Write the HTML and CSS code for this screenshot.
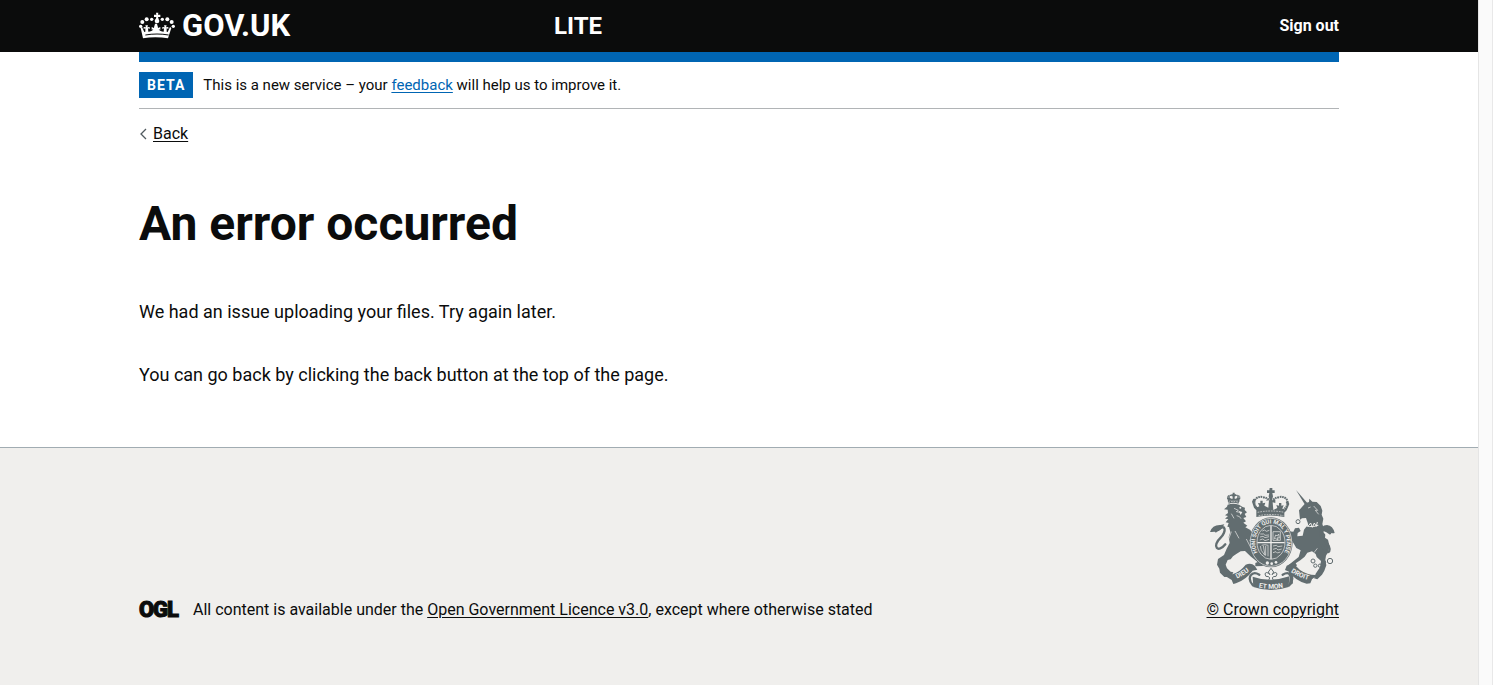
FILE: index.html
```html
<!DOCTYPE html>
<html lang="en">
<head>
<meta charset="utf-8">
<title>An error occurred - LITE - GOV.UK</title>
<link rel="stylesheet" href="styles.css">
</head>
<body>
<div class="page">
  <header class="header">
    <div class="container header-row">
      <div class="header-brand">
        <a class="brand" href="#">
          <svg class="brand-crown" viewBox="12 18 108 81" aria-hidden="true">
            <g fill="currentColor">
              <path d="M63 20h7l-1 6h7v7h-7l2 7h-9l2-7h-7v-7h7z"/>
              <circle cx="66" cy="45" r="7"/>
              <circle cx="50" cy="40" r="5"/><circle cx="35" cy="40" r="6"/><circle cx="22" cy="48" r="6"/><circle cx="17" cy="61" r="5"/>
              <circle cx="82" cy="40" r="5"/><circle cx="97" cy="40" r="6"/><circle cx="110" cy="48" r="6"/><circle cx="115" cy="61" r="5"/>
              <path d="M21 63l7 15 3-1V67l-5 2v-6l7 1-2-6h8l-2 6 7-1v6l-5-2 1 10c6 0 13-2 15-7l-5 1v-8l7 3c0-5 2-8 3-13h6c1 5 3 8 3 13l7-3v8l-5-1c2 5 9 7 15 7l1-10-5 2v-6l7 1-2-6h8l-2 6 7-1v6l-5-2v10l3 1 7-15 4 3-10 31c-24-4-52-4-75 0L17 66z"/>
            </g>
            <path d="M31 87c23-4 47-4 70 0" fill="none" stroke="#0b0c0c" stroke-width="3"/>
          </svg>
          <span>GOV.UK</span>
        </a>
      </div>
      <a class="service-name" href="#">LITE</a>
      <a class="sign-out" href="#">Sign out</a>
    </div>
  </header>

  <div class="container content">
    <div class="phase-banner">
      <strong class="tag">BETA</strong>
      <span class="phase-text">This is a new service – your <a class="link" href="#">feedback</a> will help us to improve it.</span>
    </div>
    <a class="back-link" href="#"><svg class="back-arrow" viewBox="0 0 8 12" aria-hidden="true"><path d="M7 1L2 6l5 5" fill="none" stroke="#505a5f" stroke-width="1.3"/></svg><span>Back</span></a>
    <main class="main">
      <h1 class="heading">An error occurred</h1>
      <p class="body-text">We had an issue uploading your files. Try again later.</p>
      <p class="body-text">You can go back by clicking the back button at the top of the page.</p>
    </main>
  </div>

  <footer class="footer">
    <div class="container footer-row">
      <div class="licence">
        <svg class="ogl" viewBox="0 0 41 20" role="img" aria-label="Open Government Licence"><text class="ogl-text" x="0 14 28" y="17">OGL</text></svg>
        <span>All content is available under the <a class="footer-link" href="#">Open Government Licence v3.0</a>, except where otherwise stated</span>
      </div>
      <a class="footer-link copyright" href="#">
        <svg class="crest" viewBox="33 24 375 306" aria-hidden="true">
          <defs>
            <path id="motto" d="M187 232A47 57 0 1 1 245 232"/>
            <path id="dieu" d="M103 300Q132 290 160 266"/>
            <path id="etmon" d="M166 320Q216 332 266 320"/>
            <path id="droit" d="M270 272Q300 294 334 301"/>
          </defs>
          <g fill="#626d70">
            <!-- lion -->
            <path d="M89 71l-3-9h36l-4 9q-14-5-29 0z"/>
            <path d="M101 38h6v5h4v5h-4v8h4l4-3-1-4h5v4l3 1-3 8H89l-4-8 3-1v-4h5l-1 4 5 3h4v-8h-4v-5h4z"/>
            <path d="M86 74q16-6 34 0l11 7 7 2-1 7 7 7-7 5 5 9-9 3 8 10-8 4 12 9-6 5 15 8 8 14-2 12-10 4 15 24 14 20 8 12 8 10-4 12-22 1 0-10 7-3-20-16-18-17-13 1-12 7-11 8-7 9-9 2-6 14 4 11 11 10 8 2-6 13-21 1-13-13-2-12-7-12 3-17 18-12 8-19 9-17-3-18 5-15-4-15-5-1 4-11-9-2 8-10-10-1 9-8-9-2 9-7-1-10-11-1 9-8z"/>
            <path d="M33 156q7-22 31-21l12-2-8 13q-9 9-16 8-9 3-19 2z"/>
            <!-- unicorn -->
            <path d="M291 30l34 39-7 5z"/>
            <path d="M300 91l19-21 11-4 1-10 9 9 13 1 12 12 5 14-2 12 5 12-3 16 4 12-1 12 6 8-1 9 9 6 4 17-2 17-8 14-2 12 3 17-6 16-7 12-14 14-10-3 5-14 13-19 3-19-13-12-3-9-11-8-14 4-8 12-13 11-14 9 4 6-10 10-13-2-1-10 10-8 19-15 6-20-13-7-7-12-6-10-17-4-7-9 1-9 9-6 18 1 5-10 12-2 5 10-9 6-1 10 16-2 4-18 11-14-2-12-3-9-12 1-6 4z"/>
            <path d="M366 158q-2-22 18-23 18 2 23 24-16 3-26-9z"/>
            <!-- crown -->
            <path d="M212 24h8v7h7v8h-7l2 10-3 12 10-2v10l-8-2 2 23 12-6-3-9 8 2v-8h7v8l7-1-4 10 6 3q13-13 4-23l7-3 4 9-8 19-7 7v13q-42-9-84 0V91l-7-8-6-18 4-9 7 3q-8 12 5 23l6-3-4-10 7 1v-8h7v8l8-2-3 9 12 6 2-23-8 2V59l10 2-3-12 2-10h-7v-8h7z"/>
            <!-- supporters' ribbon -->
            <path d="M74 285q12 3 26-2 25-9 40-29 16-7 27 3l8 12-14 3q-19 26-50 38l-8 2-5-12z"/>
            <path d="M355 285q-28 2-52-15l-22-22-18 9-5 13 12 5q20 28 53 36l11-1 5-12z"/>
            <path d="M161 290q53 19 110-1l-2 32q-53 18-106 0z"/>
            <path d="M272 291q-9-11 3-19l9 7-5 11 3 20-13 10z"/>
            <ellipse cx="216" cy="187" rx="65" ry="75"/>
          </g>
          <g fill="none" stroke="#626d70" stroke-width="7" stroke-linecap="round">
            <path d="M50 154c34-30 32 3 15 19-28 26-8 48 14 20"/>
            <path d="M393 160c-29-24-37 2-21 18 37 29 14 60-3 18"/>
            <path d="M162 316q-15-16-7-30 9-12 26-2M270 316q15-16 7-30-9-12-26-2"/>
          </g>
          <g fill="none" stroke="#626d70" stroke-width="6" stroke-dasharray="5 2">
            <path d="M181 91c-25-18-15-44 9-40q19 4 20 10M251 91c25-18 15-44-9-40q-19 4-20 10"/>
          </g>
          <g fill="none" stroke="#626d70" stroke-width="3">
            <circle cx="342" cy="243" r="6"/><circle cx="349" cy="257" r="5"/><circle cx="363" cy="257" r="5"/>
            <circle cx="375" cy="247" r="5"/><circle cx="393" cy="243" r="8"/><circle cx="297" cy="125" r="6"/>
          </g>
          <g fill="none" stroke="#626d70" stroke-width="4" stroke-dasharray="4 1">
            <path d="M90 63q-10-14 4-17 7 0 10 4M118 63q10-14-4-17-7 0-10 4"/>
          </g>
          <g fill="none" stroke="#f0efed" stroke-width="2">
            <ellipse cx="216" cy="187" rx="62" ry="72"/>
            <path d="M88 67q16-5 32 0M176 97q40-8 80 0M179 107q38-7 74 0" stroke-dasharray="5 3"/>
            <path d="M105 85l13 6-6 4 10 2M113 107q10 1 13 9M97 101l8 14M108 153l12 22M97 155l-8 22M142 177l14 27"/>
            <path d="M327 84l8-3M344 78l12 13-7 0 10 12M355 205l-10 13"/>
            <path d="M309 131q21 15 49 5M311 118l5 15 7-9 4 15 8-10 5 13 6-13 6 10 3-13" stroke-width="3"/>
          </g>
          <ellipse cx="216" cy="187" rx="42" ry="51" fill="#626d70" stroke="#f0efed" stroke-width="2"/>
          <path d="M216 137v100M175 188h82" stroke="#f0efed" stroke-width="4"/>
          <g fill="none" stroke="#f0efed" stroke-width="2">
            <path d="M190 153l7-3 5 4 9-3M184 162h10l4 4 12-1M183 171l9-2 6 4 12-3M182 180l9-3 7 5 12-4"/>
            <path d="M222 155h22v26h-22zM226 176l4-11 5 3 4-6 2 12-6-1 2 7-8-5z"/>
            <path d="M184 198q-1 13 13 27M193 197l5 29M200 198v29M207 197v32M188 196q8-4 20 0"/>
            <path d="M222 198l10-2 5 4 13-2M222 208l10-3 5 5 11-3M222 218l9-3 4 4 9-3"/>
          </g>
          <g fill="#f0efed">
            <circle cx="205" cy="249" r="5"/><circle cx="218" cy="251" r="4"/><circle cx="231" cy="247" r="4"/>
            <path d="M216 265l8 11-5 8q12-12 15-2 0 10-11 8l-3 4 3 7h-14l3-7-3-4q-11 2-11-8 3-10 15 2l-5-8z" stroke="#626d70" stroke-width="3"/>
            <circle cx="124" cy="83" r="3"/><path d="M119 93l11 3-5 9z"/>
          </g>
          <g class="crest-text">
            <text class="crest-motto"><textPath href="#motto" startOffset="50%">HONI SOIT QUI MAL Y PENSE</textPath></text>
            <text><textPath href="#dieu" startOffset="50%">DIEU</textPath></text>
            <text><textPath href="#etmon" startOffset="50%">ET MON</textPath></text>
            <text><textPath href="#droit" startOffset="50%">DROIT</textPath></text>
          </g>
        </svg>
        <span>© Crown copyright</span>
      </a>
    </div>
  </footer>
</div>
<div class="gutter"></div>
</body>
</html>
```
FILE: styles.css
```css
* { box-sizing: border-box; }

body {
  margin: 0;
  min-height: 100vh;
  display: flex;
  background: #fff;
  color: #0b0c0c;
  font-family: Roboto, "Liberation Sans", sans-serif;
  font-size: 16px;
  line-height: 20px;
}

.page {
  flex: 1;
  display: flex;
  flex-direction: column;
}

.gutter {
  width: 15px;
  background: #fafafa;
  border-left: 1px solid #e5e5e5;
  border-right: 1px solid #e8e8e8;
}

.container {
  width: calc(100% - 60px);
  max-width: 1200px;
  margin: 0 auto;
}

.header {
  background: #0b0c0c;
  color: #fff;
}

.header-row {
  display: flex;
  align-items: center;
  height: 52px;
  padding-bottom: 1px;
}

.header-brand { width: 415px; }

.brand {
  display: flex;
  align-items: center;
  gap: 7px;
  color: #fff;
  font-size: 31px;
  font-weight: 700;
  line-height: 32px;
  text-decoration: none;
}

.brand-crown {
  width: 36px;
  height: 27px;
}

.service-name {
  flex: 1;
  color: #fff;
  font-size: 24px;
  font-weight: 700;
  line-height: 30px;
  text-decoration: none;
}

.sign-out {
  color: #fff;
  font-weight: 700;
  text-decoration: none;
}

.content {
  border-top: 10px solid #0065b3;
}

.phase-banner {
  display: flex;
  align-items: center;
  gap: 10px;
  padding: 10px 0;
  border-bottom: 1px solid #b1b4b6;
}

.phase-text { font-size: 15px; }

.tag {
  padding: 5px 8px;
  background: #0065b3;
  color: #fff;
  font-size: 14px;
  line-height: 16px;
  letter-spacing: 1px;
}

.link { color: #0065b3; }

.link,
.footer-link,
.back-link span {
  text-decoration: underline;
  text-underline-offset: 2px;
  text-decoration-thickness: 1px;
}

.back-link {
  display: inline-flex;
  align-items: center;
  gap: 6px;
  margin-top: 15px;
  color: #0b0c0c;
  text-decoration: none;
}

.back-arrow {
  width: 8px;
  height: 12px;
}

.main { padding: 54px 0 60px; }

.heading {
  margin: 0 0 50px;
  font-size: 48px;
  line-height: 50px;
}

.body-text {
  margin: 0 0 38px;
  font-size: 18px;
  line-height: 25px;
}

.body-text:last-child { margin-bottom: 0; }

.footer {
  flex: 1;
  border-top: 1px solid #a1acb2;
  background: #f0efed;
}

.footer-row {
  display: flex;
  align-items: flex-end;
  justify-content: space-between;
  padding: 40px 0 65px;
}

.licence {
  display: flex;
  align-items: center;
  gap: 13px;
}

.ogl {
  width: 41px;
  height: 20px;
  overflow: visible;
}

.ogl-text {
  fill: #0b0c0c;
  stroke: #0b0c0c;
  stroke-width: 1px;
  font-size: 22px;
  font-weight: 900;
}

.footer-link { color: #0b0c0c; }

.copyright {
  display: flex;
  flex-direction: column;
  align-items: center;
  gap: 10px;
}

.crest {
  width: 125px;
  height: 102px;
  overflow: visible;
}

.crest-text {
  fill: #f0efed;
  font-size: 20px;
  font-weight: 700;
  text-anchor: middle;
}

.crest-motto { font-size: 17px; }
```
